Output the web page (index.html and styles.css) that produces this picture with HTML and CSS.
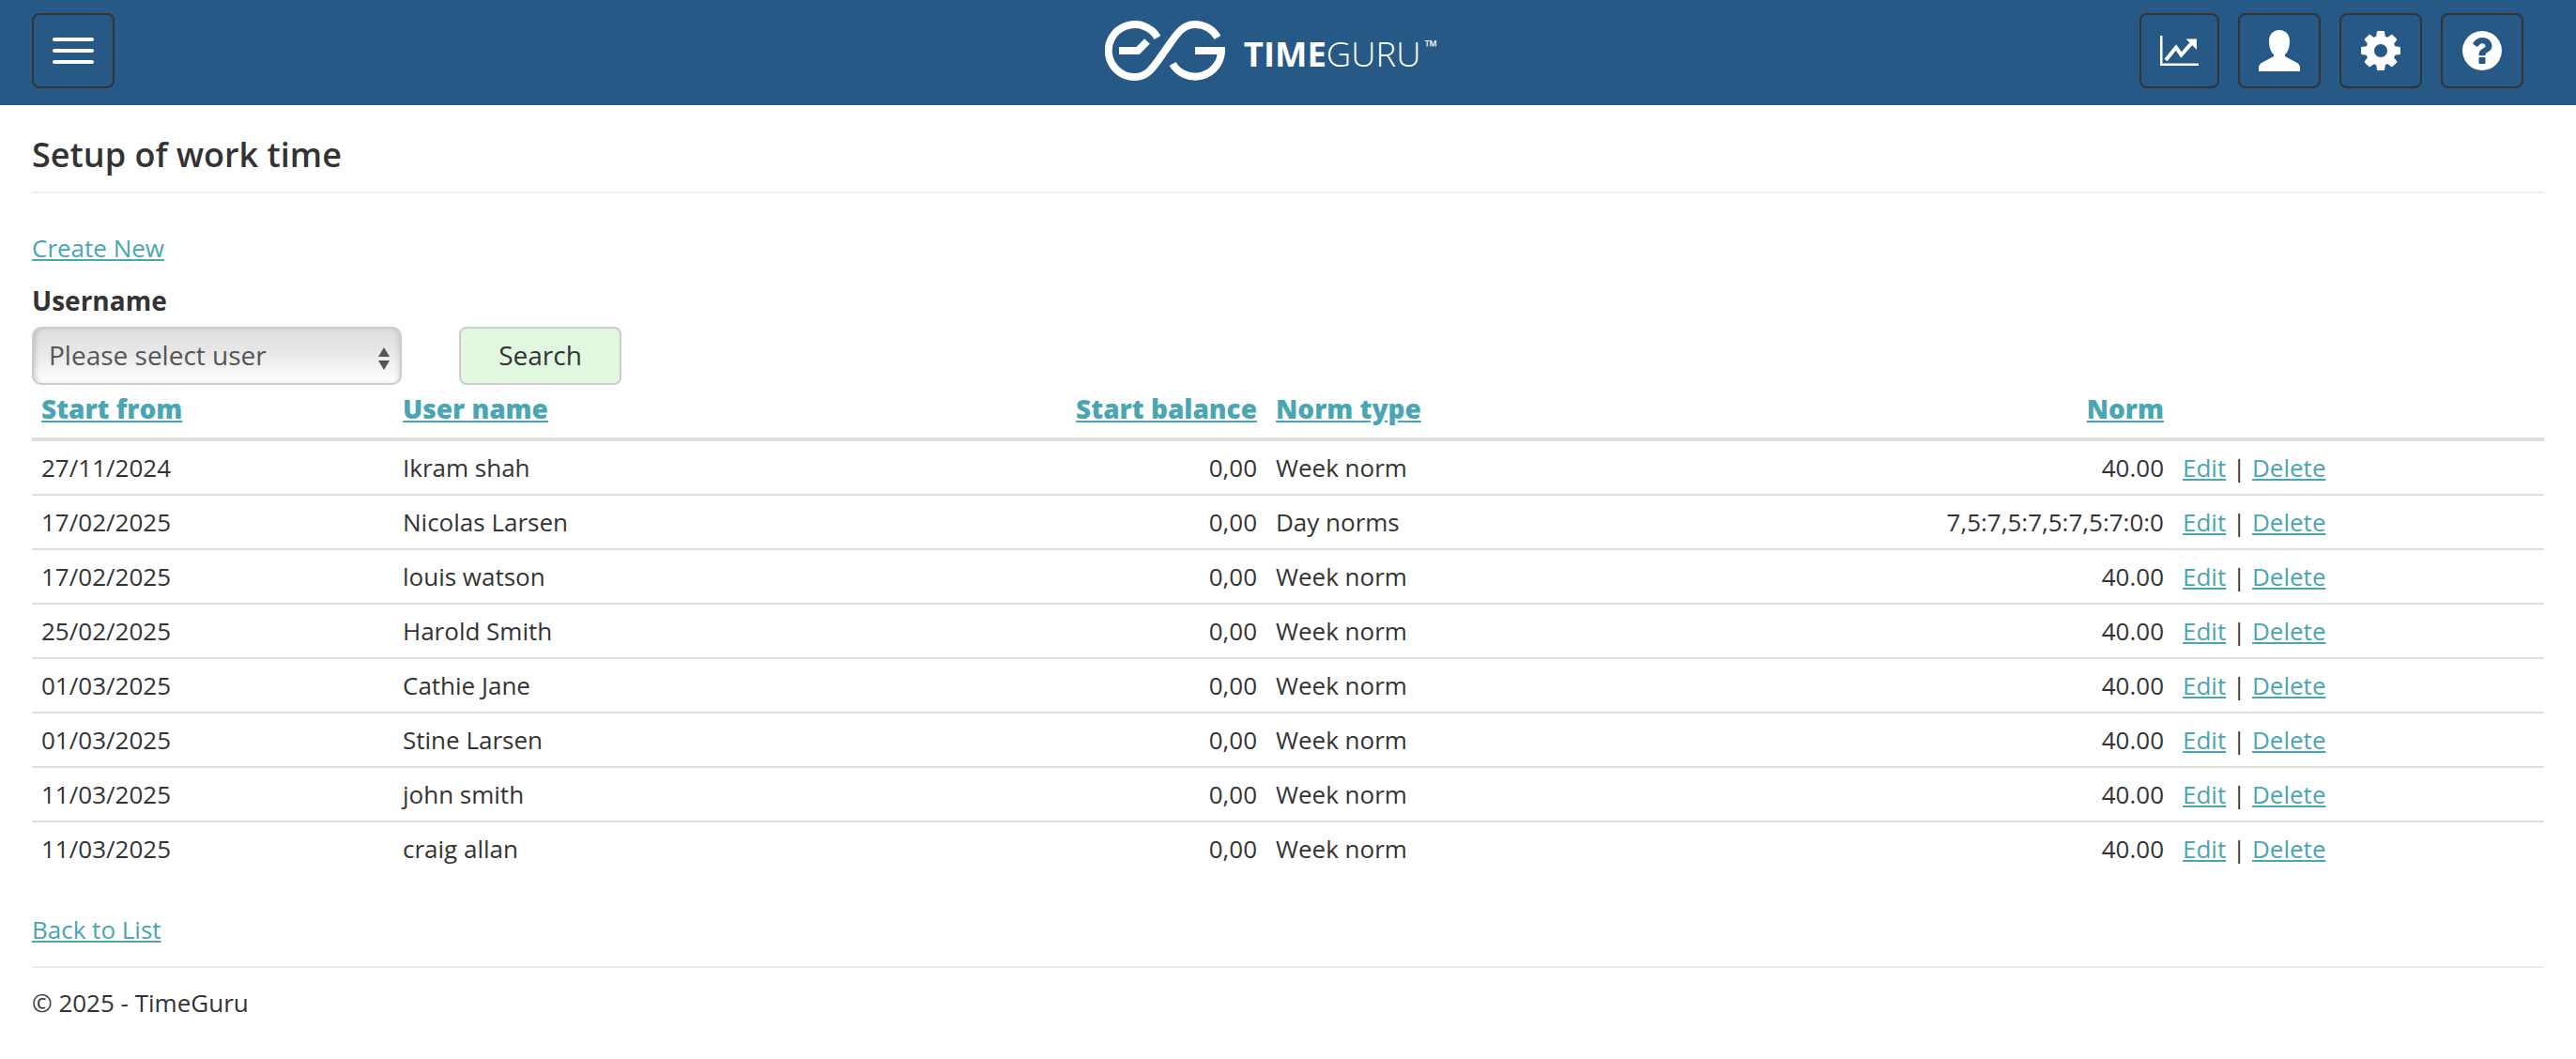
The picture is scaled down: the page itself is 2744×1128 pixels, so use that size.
FILE: index.html
```html
<!DOCTYPE html>
<html lang="en">
<head>
<meta charset="utf-8">
<title>Setup of work time - TimeGuru</title>
<link rel="stylesheet" href="styles.css">
</head>
<body>
<header class="topbar">
  <div class="topbar-left">
    <button class="nav-btn nav-btn-menu" type="button" aria-label="Menu">
      <span class="bar"></span><span class="bar"></span><span class="bar"></span>
    </button>
  </div>
  <a class="logo" href="#">
    <svg class="logo-mark" viewBox="0 0 128 64" width="128" height="64" aria-hidden="true">
      <path class="logo-stroke" d="M56 18A28 28 0 1 0 32 60C46 60 52 49 64 32S82 4 96 4A28 28 0 0 1 120 18"/>
      <path class="logo-stroke" d="M72 46A28 28 0 0 0 124 32H96"/>
      <path class="logo-stroke" d="M15 32H35L45 22"/>
    </svg>
    <span class="logo-text"><b>TIME</b>GURU<sup>™</sup></span>
  </a>
  <div class="topbar-right">
    <button class="nav-btn nav-btn-chart" type="button" aria-label="Statistics">
      <svg class="icon-chart" viewBox="0 0 41 32" aria-hidden="true">
        <path d="M0 0h2.500v29.500H41V32H0Z"/>
        <path class="chart-line" d="M6 26L17 12.500L22.500 20.500L33 8.500"/>
        <path d="M27.500 3.500H39V15Z"/>
      </svg>
    </button>
    <button class="nav-btn" type="button" aria-label="Profile">
      <svg class="icon-user" viewBox="0 0 44 44" aria-hidden="true"><path d="M22 0C29 0 33 5 33 12C33 18 31 24 28 26L28 28L41 35C43 36 44 38 44 40V44H0V40C0 38 1 36 3 35L16 28L16 26C13 24 11 18 11 12C11 5 15 0 22 0Z"/></svg>
    </button>
    <button class="nav-btn" type="button" aria-label="Settings">
      <svg class="icon-fa" viewBox="128 128 1536 1536" aria-hidden="true"><path d="M1152 896q0-106-75-181t-181-75-181 75-75 181 75 181 181 75 181-75 75-181zm512-109v222q0 12-8 23t-20 13l-185 28q-19 54-39 91 35 50 107 138 10 12 10 25t-9 23q-27 37-99 108t-94 71q-12 0-26-9l-138-108q-44 23-91 38-16 136-29 186-7 28-36 28h-222q-14 0-24.500-8.500t-11.500-21.500l-28-184q-49-16-90-37l-141 107q-10 9-25 9-14 0-25-11-126-114-165-168-7-10-7-23 0-12 8-23 15-21 51-66.500t54-70.500q-27-50-41-99l-183-27q-13-2-21-12.500t-8-23.500v-222q0-12 8-23t19-13l186-28q14-46 39-92-40-57-107-138-10-12-10-24 0-10 9-23 26-36 98.500-107.500t94.500-71.500q13 0 26 10l138 107q44-23 91-38 16-136 29-186 7-28 36-28h222q14 0 24.500 8.500t11.500 21.500l28 184q49 16 90 37l142-107q9-9 24-9 13 0 25 10 129 119 165 170 7 8 7 22 0 12-8 23-15 21-51 66.500t-54 70.500q26 50 41 98l183 28q13 2 21 12.500t8 23.500z"/></svg>
    </button>
    <button class="nav-btn" type="button" aria-label="Help">
      <svg class="icon-fa" viewBox="128 128 1536 1536" aria-hidden="true"><path d="M1024 1376v-192q0-14-9-23t-23-9h-192q-14 0-23 9t-9 23v192q0 14 9 23t23 9h192q14 0 23-9t9-23zm256-672q0-88-55.500-163t-138.500-116-170-41q-243 0-371 213-15 24 8 42l132 100q7 6 19 6 16 0 25-12 53-68 86-92 34-24 86-24 48 0 85.500 26t37.500 59q0 38-20 61t-68 45q-63 28-115.500 86.500t-52.500 125.500v36q0 14 9 23t23 9h192q14 0 23-9t9-23q0-19 21.500-49.500t54.500-49.500q32-18 49-28.500t46-35 44.500-48 28-60.500 12.500-81zm384 192q0 209-103 385.500t-279.500 279.500-385.500 103-385.500-103-279.500-279.500-103-385.500 103-385.500 279.500-279.500 385.500-103 385.500 103 279.500 279.500 103 385.500z"/></svg>
    </button>
  </div>
</header>

<main class="content">
  <h1 class="page-title">Setup of work time</h1>
  <p class="create-link"><a href="#">Create New</a></p>
  <form class="filter">
    <label class="filter-label" for="user">Username</label>
    <div class="filter-row">
      <div class="select-wrap">
        <select class="select" id="user"><option>Please select user</option></select>
      </div>
      <button class="search-btn" type="button">Search</button>
    </div>
  </form>

  <table class="grid">
    <colgroup>
      <col class="col-start"><col class="col-user"><col class="col-balance"><col class="col-type"><col class="col-norm"><col class="col-actions">
    </colgroup>
    <thead>
      <tr>
        <th><a href="#">Start from</a></th>
        <th><a href="#">User name</a></th>
        <th class="num"><a href="#">Start balance</a></th>
        <th><a href="#">Norm type</a></th>
        <th class="num"><a href="#">Norm</a></th>
        <th></th>
      </tr>
    </thead>
    <tbody>
      <tr><td>27/11/2024</td><td>Ikram shah</td><td class="num">0,00</td><td>Week norm</td><td class="num">40.00</td><td><a href="#">Edit</a> | <a href="#">Delete</a></td></tr>
      <tr><td>17/02/2025</td><td>Nicolas Larsen</td><td class="num">0,00</td><td>Day norms</td><td class="num">7,5:7,5:7,5:7,5:7:0:0</td><td><a href="#">Edit</a> | <a href="#">Delete</a></td></tr>
      <tr><td>17/02/2025</td><td>louis watson</td><td class="num">0,00</td><td>Week norm</td><td class="num">40.00</td><td><a href="#">Edit</a> | <a href="#">Delete</a></td></tr>
      <tr><td>25/02/2025</td><td>Harold Smith</td><td class="num">0,00</td><td>Week norm</td><td class="num">40.00</td><td><a href="#">Edit</a> | <a href="#">Delete</a></td></tr>
      <tr><td>01/03/2025</td><td>Cathie Jane</td><td class="num">0,00</td><td>Week norm</td><td class="num">40.00</td><td><a href="#">Edit</a> | <a href="#">Delete</a></td></tr>
      <tr><td>01/03/2025</td><td>Stine Larsen</td><td class="num">0,00</td><td>Week norm</td><td class="num">40.00</td><td><a href="#">Edit</a> | <a href="#">Delete</a></td></tr>
      <tr><td>11/03/2025</td><td>john smith</td><td class="num">0,00</td><td>Week norm</td><td class="num">40.00</td><td><a href="#">Edit</a> | <a href="#">Delete</a></td></tr>
      <tr><td>11/03/2025</td><td>craig allan</td><td class="num">0,00</td><td>Week norm</td><td class="num">40.00</td><td><a href="#">Edit</a> | <a href="#">Delete</a></td></tr>
    </tbody>
  </table>

  <p class="back-link"><a href="#">Back to List</a></p>
  <footer class="footer">© 2025 - TimeGuru</footer>
</main>
</body>
</html>
```
FILE: styles.css
```css
* { box-sizing: border-box; }

html, body { margin: 0; padding: 0; }

body {
  background: #fff;
  color: #333;
  font-family: "Open Sans", "Liberation Sans", sans-serif;
  font-size: 26px;
  line-height: 40px;
}

a { color: #4aa6b2; text-decoration: underline; }

.topbar {
  display: grid;
  grid-template-columns: 1fr auto 1fr;
  align-items: center;
  height: 112px;
  padding: 0 56px 4px 34px;
  background: #265985;
}

.topbar-left { display: flex; }
.topbar-right { display: flex; justify-content: flex-end; gap: 20px; }

.nav-btn {
  display: flex;
  flex-direction: column;
  align-items: center;
  justify-content: center;
  gap: 8px;
  width: 88px;
  height: 80px;
  padding: 0;
  background: transparent;
  border: 2px solid #333;
  border-radius: 8px;
}

.nav-btn-chart { width: 85px; }

.bar { width: 44px; height: 4px; border-radius: 2px; background: #fff; }

.nav-btn svg { display: block; fill: #fff; }
.icon-chart { width: 41px; height: 32px; }
.icon-user { width: 44px; height: 44px; }
.icon-fa { width: 42px; height: 42px; }
.nav-btn svg .chart-line { fill: none; stroke: #fff; stroke-width: 4; }

.logo {
  display: flex;
  align-items: center;
  gap: 20px;
  margin-right: 14px;
  color: #fff;
  text-decoration: none;
}

.logo-mark { display: block; }
.logo-stroke { fill: none; stroke: #fff; stroke-width: 8; }

.logo-text {
  display: block;
  color: #fff;
  font-size: 36.500px;
  font-weight: 300;
  line-height: 40px;
  white-space: nowrap;
  margin-top: 6px;
}
.logo-text b { font-weight: 700; }
.logo-text sup {
  font-size: 18px;
  font-weight: 400;
  line-height: 0;
  vertical-align: 15px;
  margin-left: 4px;
}

.content { padding: 0 34px; }

.page-title {
  margin: 0 0 39px;
  padding: 33px 0 19px;
  border-bottom: 2px solid #eee;
  font-size: 36px;
  font-weight: 600;
  line-height: 40px;
}

.create-link { margin: 0 0 18px; line-height: 38px; }

.filter-label {
  display: block;
  margin-bottom: 9px;
  font-size: 28px;
  font-weight: 700;
  line-height: 38px;
}

.filter-row { display: flex; gap: 61px; }

.select-wrap { position: relative; width: 394px; height: 62px; }

.select-wrap::before,
.select-wrap::after {
  content: "";
  position: absolute;
  right: 13px;
  border-left: 6.500px solid transparent;
  border-right: 6.500px solid transparent;
  pointer-events: none;
}
.select-wrap::before { top: 22px; border-bottom: 10px solid #555; }
.select-wrap::after { top: 36px; border-top: 10px solid #555; }

.select {
  appearance: none;
  display: block;
  width: 100%;
  height: 100%;
  padding: 0 40px 3px 16px;
  border: 2px solid #ccc;
  border-radius: 10px;
  background: linear-gradient(#dedede, #e8e8e8 45%, #fff);
  box-shadow: inset 4px 0 5px -2px rgba(0,0,0,.16), inset -4px 0 5px -2px rgba(0,0,0,.1);
  color: #555;
  font-family: inherit;
  font-size: 28px;
}

.search-btn {
  width: 173px;
  height: 62px;
  padding: 0 0 3px;
  border: 2px solid #ccc;
  border-radius: 8px;
  background: #e1f7df;
  color: #333;
  font-family: inherit;
  font-size: 28px;
}

.grid {
  width: 100%;
  table-layout: fixed;
  border-collapse: separate;
  border-spacing: 0;
}

.col-start { width: 385px; }
.col-user { width: 500px; }
.col-balance { width: 430px; }
.col-type { width: 350px; }
.col-norm { width: 616px; }

.grid th {
  padding: 5px 10px 11px;
  border-bottom: 4px solid #ddd;
  font-size: 28px;
  font-weight: 800;
  text-align: left;
}

.grid td {
  padding: 8px 10px;
  border-top: 2px solid #ddd;
  white-space: nowrap;
}

.grid tbody tr:first-child td { border-top: 0; }

.grid .num { text-align: right; }

.back-link {
  margin: 38px 0 19px;
}

.footer {
  padding-top: 17px;
  border-top: 2px solid #eee;
  padding-bottom: 39px;
}
```
